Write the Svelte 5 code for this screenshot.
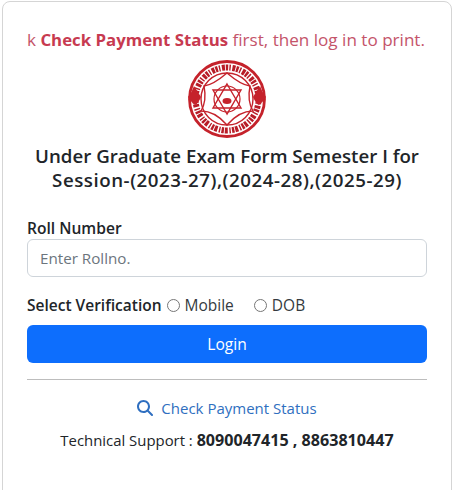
<script lang="ts">
	let rollNo = $state('');
	let verify = $state('');
</script>

<div class="page">
	<div class="card">
		<p class="notice">k <strong>Check Payment Status</strong> first, then log in to print.</p>

		<div class="emblem">
			<svg viewBox="0 0 80 80" width="80" height="80" aria-hidden="true">
				<circle cx="40" cy="40" r="37.5" fill="#fff" stroke="#c5222b" stroke-width="2.8" />
				<circle cx="40" cy="40" r="26" fill="none" stroke="#c5222b" stroke-width="1.4" />
				<circle cx="40" cy="40" r="31.5" fill="none" stroke="#b81c27" stroke-width="6" stroke-dasharray="2.4 1.2 1.4 1.6 3 0.9" />
				<circle cx="40" cy="40" r="13" fill="none" stroke="#c5222b" stroke-width="1.2" />
				<g fill="none" stroke="#c5222b" stroke-width="1.4">
					<path d="M40 14 Q54 26 63 27 Q60 42 66 52 Q52 52 40 66 Q28 52 14 52 Q20 42 17 27 Q26 26 40 14Z" />
					<path d="M40 25 L54 49 H26Z" />
					<path d="M40 55 L26 31 H54Z" />
				</g>
				<ellipse cx="40" cy="42" rx="4.5" ry="3" fill="#c5222b" />
				<path d="M1 38 Q5 33 7 27 Q11 33 14 38 Q11 45 8 46 Q4 43 1 38Z" fill="#c5222b" />
				<path d="M79 38 Q75 33 73 27 Q69 33 66 38 Q69 45 72 46 Q76 43 79 38Z" fill="#c5222b" />
			</svg>
		</div>

		<h1>Under Graduate Exam Form Semester I for <span class="session">Session-(2023-27),(2024-28),(2025-29)</span></h1>

		<form class="login" onsubmit={(e) => e.preventDefault()}>
			<label class="field-label" for="roll">Roll Number</label>
			<input id="roll" type="text" placeholder="Enter Rollno." bind:value={rollNo} />

			<div class="verify">
				<span class="verify-title">Select Verification</span>
				<label class="radio"><input type="radio" name="verify" value="mobile" bind:group={verify} /> Mobile</label>
				<label class="radio"><input type="radio" name="verify" value="dob" bind:group={verify} /> DOB</label>
			</div>

			<button type="submit">Login</button>
		</form>

		<hr />

		<a class="status-link" href="#status">
			<svg viewBox="0 0 512 512" width="16" height="16" aria-hidden="true">
				<path fill="currentColor" d="M416 208c0 45.900-14.900 88.300-40 122.700L502.600 457.400c12.500 12.500 12.500 32.800 0 45.300s-32.800 12.500-45.300 0L330.700 376c-34.400 25.200-76.800 40-122.700 40C93.100 416 0 322.900 0 208S93.100 0 208 0S416 93.100 416 208zM208 352a144 144 0 1 0 0-288 144 144 0 1 0 0 288z" />
			</svg>
			Check Payment Status
		</a>

		<p class="support">Technical Support : <strong>8090047415 , 8863810447</strong></p>
	</div>
</div>

<style>
	:global(body) {
		margin: 0;
		background: #fff;
		font-family: "Open Sans", "Noto Sans", sans-serif;
		color: #212529;
	}
	.page {
		height: 490px;
		overflow: hidden;
		padding: 1px 1px 0 2px;
		box-sizing: border-box;
	}
	.card {
		box-sizing: border-box;
		height: 520px;
		padding: 27px 24px 0;
		background: #fff;
		border: 1px solid #d5d5d5;
		border-radius: 8px;
	}
	.notice {
		margin: 0;
		height: 22px;
		font-size: 17.1px;
		line-height: 22px;
		white-space: nowrap;
		overflow: hidden;
		color: #c4546a;
	}
	.notice strong {
		color: #c73a50;
		font-size: 16.8px;
		font-weight: 700;
	}
	.emblem {
		display: flex;
		justify-content: center;
		margin-top: 8px;
	}
	h1 {
		margin: 5px 0 0;
		font-size: 18.7px;
		line-height: 24px;
		font-weight: 600;
		text-align: center;
		color: #212529;
	}
	.session {
		letter-spacing: 0.54px;
	}
	.login {
		display: flex;
		flex-direction: column;
		margin-top: 25px;
	}
	.field-label {
		font-size: 15.6px;
		line-height: 22px;
		font-weight: 600;
	}
	#roll {
		box-sizing: border-box;
		width: 100%;
		height: 38px;
		padding: 6px 12px;
		border: 1px solid #ced4da;
		border-radius: 6px;
		font: inherit;
		font-size: 15.2px;
		outline: none;
	}
	#roll::placeholder {
		color: #6c757d;
	}
	.verify {
		display: flex;
		align-items: center;
		margin-top: 17px;
		height: 22px;
		font-size: 15.5px;
	}
	.verify-title {
		font-weight: 600;
		margin-right: 5px;
	}
	.radio {
		display: inline-flex;
		align-items: center;
		gap: 5px;
		margin-right: 20px;
		color: #343a40;
	}
	.radio input {
		margin: 0;
		width: 13px;
		height: 13px;
	}
	button {
		margin-top: 9px;
		height: 38px;
		background: #0d6efd;
		color: #fff;
		border: none;
		border-radius: 6px;
		font: inherit;
		font-size: 15.6px;
	}
	hr {
		margin: 16px 0 0;
		border: none;
		border-top: 1px solid #bdbdbd;
	}
	.status-link {
		display: flex;
		justify-content: center;
		align-items: center;
		gap: 8px;
		margin-top: 17px;
		font-size: 15px;
		line-height: 22px;
		color: #2f6fc0;
		text-decoration: none;
	}
	.support {
		margin: 10px 0 0;
		text-align: center;
		font-size: 14.9px;
		line-height: 22px;
	}
	.support strong {
		font-size: 16.1px;
		font-weight: 700;
	}
</style>
